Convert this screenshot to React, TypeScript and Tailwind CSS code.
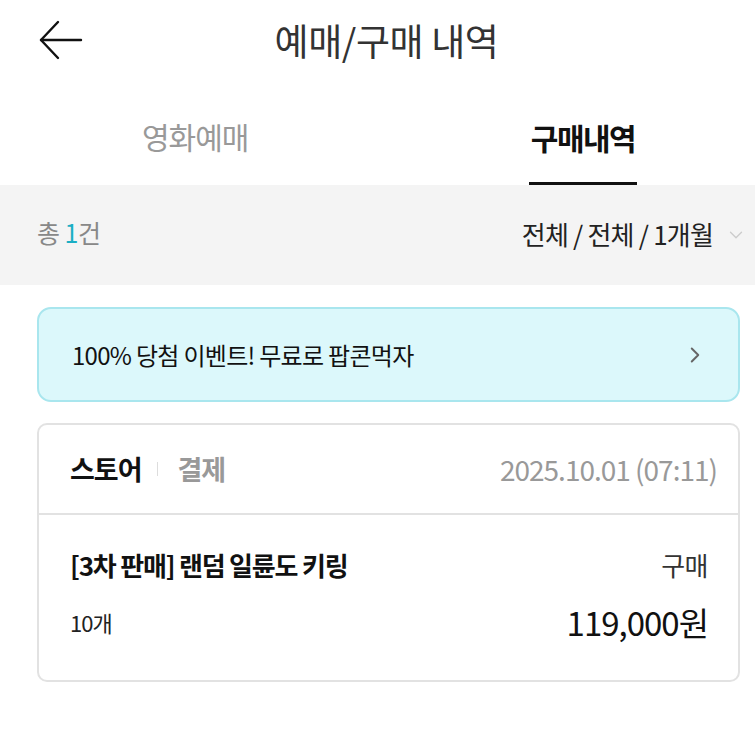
import { ChevronDown, ChevronRight } from 'lucide-react';

const font = {
  fontFamily: '"Noto Sans CJK KR", "Noto Sans", sans-serif',
};

export default function App() {
  return (
    <div className="h-[750px] w-[755px] overflow-hidden bg-white" style={font}>
      {/* header */}
      <div className="relative flex h-[82px] items-center justify-center">
        <svg
          className="absolute left-[38px] top-[20px]"
          width="46"
          height="40"
          viewBox="0 0 46 40"
          fill="none"
          stroke="#111"
          strokeWidth="2.4"
          strokeLinecap="round"
          strokeLinejoin="round"
        >
          <path d="M20 2 L3 20 L20 38" />
          <path d="M3 20 H43" />
        </svg>
        <h1 className="pl-[18px] text-[37px] font-normal tracking-[-0.4px] text-[#333]">예매/구매 내역</h1>
      </div>

      {/* tabs */}
      <div className="flex h-[103px] pl-[142px] pr-[118px]">
        <div className="flex items-center">
          <span className="pt-[6px] text-[30px] tracking-[-1px] text-[#999]">영화예매</span>
        </div>
        <div className="ml-auto flex items-end">
          <div className="flex flex-col items-center">
            <span className="pb-[22px] text-[30px] font-bold tracking-[-1.5px] text-[#111]">구매내역</span>
            <div className="h-[3px] w-[108px] bg-[#111]" />
          </div>
        </div>
      </div>

      {/* filter bar */}
      <div className="flex h-[100px] items-center justify-between bg-[#f4f4f4] pl-[37px] pr-[8px]">
        <span className="pb-[4px] text-[25px] tracking-[-0.5px] text-[#888]">
          총 <span className="text-[#1aaec4]">1</span>건
        </span>
        <div className="flex items-center gap-[12px]">
          <span className="pb-[4px] text-[26px] tracking-[-0.8px] text-[#222]">전체 / 전체 / 1개월</span>
          <ChevronDown className="h-[22px] w-[22px] text-[#ccc]" strokeWidth={1.5} />
        </div>
      </div>

      <div className="flex flex-col gap-[21px] pl-[37px] pr-[15px] pt-[22px]">
        {/* banner */}
        <div className="flex h-[95px] items-center justify-between rounded-[14px] border-2 border-[#a9e6ee] bg-[#dcf8fb] pl-[33px] pr-[30px]">
          <span className="text-[24px] tracking-[-0.7px] text-[#111]">100% 당첨 이벤트! 무료로 팝콘먹자</span>
          <ChevronRight className="h-[26px] w-[26px] text-[#666]" strokeWidth={1.8} />
        </div>

        {/* card */}
        <div className="rounded-[10px] border-2 border-[#e2e2e2]">
          <div className="flex h-[90px] items-center justify-between border-b-2 border-[#e2e2e2] pl-[31px] pr-[21px]">
            <div className="flex items-center">
              <span className="text-[27px] font-bold tracking-[-1px] text-[#111]">스토어</span>
              <span className="ml-[15px] mr-[20px] h-[14px] w-[1px] bg-[#ddd]" />
              <span className="text-[27px] font-bold tracking-[-1px] text-[#999]">결제</span>
            </div>
            <span className="text-[28px] tracking-[-1px] text-[#999]">2025.10.01 (07:11)</span>
          </div>
          <div className="flex flex-col pb-[32px] pl-[31px] pr-[30px] pt-[30px]">
            <div className="flex items-center justify-between">
              <span className="text-[26px] font-bold tracking-[-1.2px] text-[#111]">[3차 판매] 랜덤 일륜도 키링</span>
              <span className="text-[26px] tracking-[-0.5px] text-[#333]">구매</span>
            </div>
            <div className="mt-[14px] flex items-center justify-between">
              <span className="text-[22px] tracking-[-1px] text-[#222]">10개</span>
              <span className="text-[33px] tracking-[-1px] text-[#111]">119,000원</span>
            </div>
          </div>
        </div>
      </div>
    </div>
  );
}
